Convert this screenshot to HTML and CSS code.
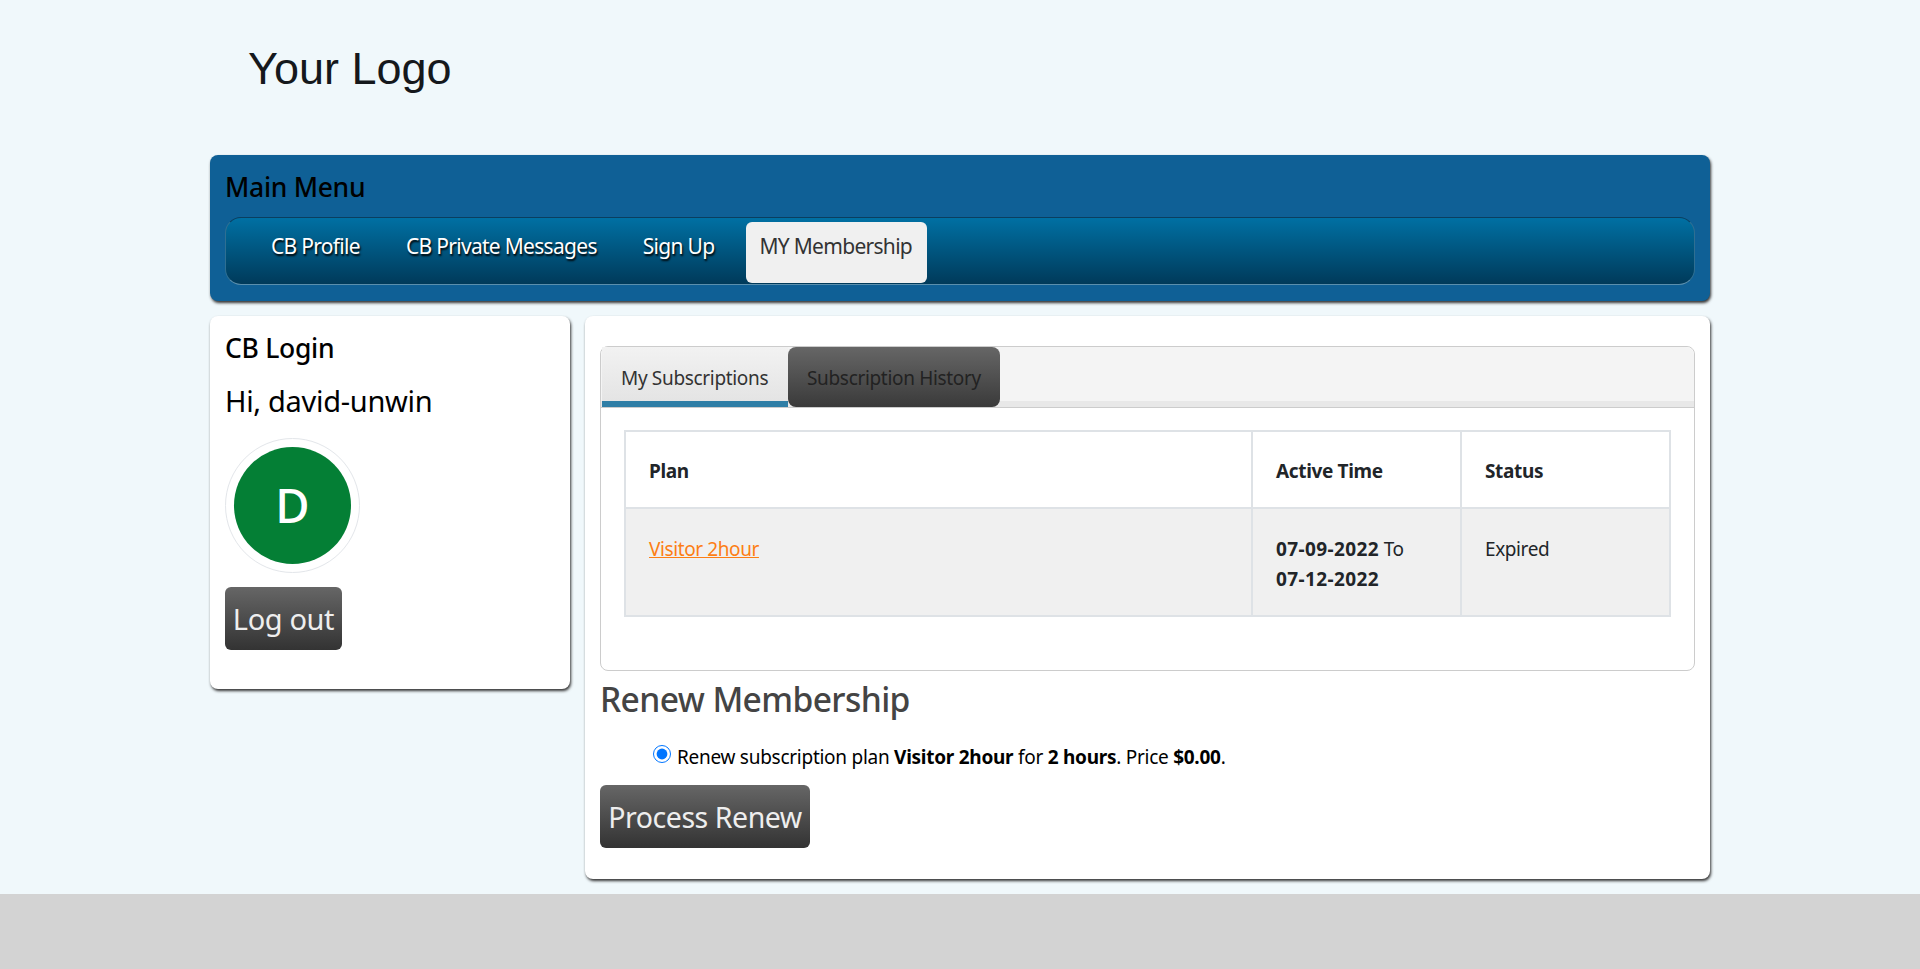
FILE: index.html
```html
<!DOCTYPE html>
<html lang="en">
<head>
    <meta charset="UTF-8">
    <meta name="viewport" content="width=device-width, initial-scale=1.0">
    <title>My Membership</title>
    <link rel="stylesheet" href="styles.css">
</head>
<body>

<div class="container">
    <div class="logo">Your Logo</div>

    <div class="menu-panel">
        <h3 class="panel-title">Main Menu</h3>
        <ul class="main-nav">
            <li><a href="#">CB Profile</a></li>
            <li><a href="#">CB Private Messages</a></li>
            <li><a href="#">Sign Up</a></li>
            <li class="active"><a href="#">MY Membership</a></li>
        </ul>
    </div>

    <div class="columns">
        <div class="card sidebar">
            <h3 class="panel-title">CB Login</h3>
            <p class="greeting">Hi, david-unwin</p>
            <div class="avatar"><span>D</span></div>
            <button type="button" class="button-dark button-logout">Log out</button>
        </div>

        <div class="card content">
            <div class="tabs">
                <div class="tab-bar">
                    <a href="#" class="tab tab-active">My Subscriptions</a>
                    <a href="#" class="tab tab-dark">Subscription History</a>
                </div>
                <div class="tab-body">
                    <table class="plans">
                        <thead>
                            <tr>
                                <th class="col-plan">Plan</th>
                                <th class="col-time">Active Time</th>
                                <th>Status</th>
                            </tr>
                        </thead>
                        <tbody>
                            <tr>
                                <td><a href="#">Visitor 2hour</a></td>
                                <td><strong class="date">07-09-2022</strong> To <strong class="date">07-12-2022</strong></td>
                                <td>Expired</td>
                            </tr>
                        </tbody>
                    </table>
                </div>
            </div>

            <h2 class="renew-title">Renew Membership</h2>
            <label class="renew-option">
                <input type="radio" name="plan" checked>
                <span>Renew subscription plan <strong>Visitor 2hour</strong> for <strong>2 hours</strong>. Price <strong>$0.00</strong>.</span>
            </label>
            <button type="button" class="button-dark button-renew">Process Renew</button>
        </div>
    </div>
</div>

<div class="footer"></div>

</body>
</html>
```

FILE: styles.css
```css
body {
    font-family: "Noto Sans", "Open Sans", Arial, sans-serif;
    margin: 0;
    padding: 0;
    background-color: #f0f8fb; /* Pale blue */
    color: #000;
}
.container {
    width: 1500px;
    margin: 0 auto;
    padding-bottom: 15px;
}
.logo {
    height: 155px;
    box-sizing: border-box;
    padding: 41px 0 0 38px;
    font-family: "Liberation Sans", Arial, sans-serif;
    font-size: 45px;
    line-height: 56px;
    color: #15181c;
}

/* Main menu */
.menu-panel {
    height: 146px;
    box-sizing: border-box;
    padding: 14px 15px 0;
    background-color: #0f6096;
    border-radius: 8px;
    box-shadow: 1px 2px 3px #333;
}
.panel-title {
    margin: 0;
    font-size: 26.5px;
    line-height: 36px;
    font-weight: 500;
    letter-spacing: -0.3px;
}
.main-nav {
    display: flex;
    height: 68px;
    box-sizing: border-box;
    margin: 12px 0 0;
    padding: 4px 0 0 30px;
    list-style: none;
    gap: 16px;
    background: linear-gradient(to bottom, #0070a3, #003a5a);
    border: 1px solid;
    border-color: #0a3f60 #2f6f92 #5a8fad;
    border-radius: 16px;
}
.main-nav a {
    display: block;
    height: 61px;
    box-sizing: border-box;
    padding: 9px 15px 0;
    font-size: 21px;
    line-height: 30px;
    letter-spacing: -0.7px;
    color: #fff;
    text-decoration: none;
    text-shadow: 1px 2px 2px #000;
    border-radius: 6px;
}
.main-nav .active {
    margin-left: 1px;
}
.main-nav .active a {
    padding-left: 13px;
    background-color: #f0f0f0;
    color: #333;
    text-shadow: none;
}

/* Columns */
.columns {
    display: flex;
    align-items: flex-start;
    gap: 15px;
    margin-top: 15px;
}
.card {
    box-sizing: border-box;
    padding: 14px 15px 15px;
    background-color: #fff;
    border-radius: 8px;
    box-shadow: 1px 2px 3px #333;
}
.sidebar {
    width: 360px;
    height: 373px;
}
.content {
    width: 1125px;
    height: 563px;
}
.greeting {
    margin: 15px 0 0;
    font-size: 29px;
    line-height: 40px;
    letter-spacing: -0.3px;
}
.avatar {
    width: 135px;
    height: 135px;
    box-sizing: border-box;
    display: flex;
    align-items: center;
    justify-content: center;
    margin-top: 17px;
    border: 1px solid #e3e6ea;
    border-radius: 50%;
}
.avatar span {
    width: 117px;
    height: 117px;
    border-radius: 50%;
    background-color: #047f35;
    color: #fff;
    font-size: 47px;
    font-weight: 500;
    line-height: 117px;
    text-align: center;
}
.button-dark {
    display: block;
    height: 63px;
    padding: 0;
    border: none;
    border-radius: 6px;
    background: linear-gradient(to bottom, #666, #333);
    color: #eee;
    font-family: inherit;
    font-size: 29px;
    letter-spacing: -0.4px;
    white-space: nowrap;
    cursor: pointer;
}
.button-logout {
    width: 117px;
    margin-top: 14px;
}
.button-renew {
    width: 210px;
    margin-top: 13px;
    font-size: 28.5px;
    letter-spacing: -0.45px;
}

/* Tabs */
.tabs {
    height: 325px;
    box-sizing: border-box;
    margin-top: 16px;
    border: 1px solid #ccc;
    border-radius: 8px;
}
.tab-bar {
    display: flex;
    height: 60px;
    padding-left: 1px;
    background: linear-gradient(to bottom, #f4f4f4 54px, #e8e8e8 54px);
    border-bottom: 1px solid #ccc;
    border-radius: 8px 8px 0 0;
}
.tab {
    display: block;
    box-sizing: border-box;
    height: 60px;
    font-size: 19px;
    line-height: 62px;
    letter-spacing: -0.33px;
    color: #333;
    text-decoration: none;
}
.tab-active {
    width: 186px;
    padding-left: 19px;
    background: linear-gradient(to bottom, #f2f2f2, #e4e4e4);
    border-bottom: 6px solid #2e7ea6;
}
.tab-dark {
    width: 212px;
    padding-left: 19px;
    background: linear-gradient(to bottom, #666, #3a3a3a);
    border-radius: 8px;
    color: #222;
}
.tab-body {
    padding: 22px 23px 0;
}

/* Plans table */
.plans {
    width: 1047px;
    border-collapse: collapse;
    table-layout: fixed;
    font-size: 19px;
    line-height: 30px;
    color: #212529;
}
.plans th,
.plans td {
    padding: 25px 22px 21px 23px;
    border: 2px solid #dee2e6;
    text-align: left;
    vertical-align: top;
    letter-spacing: -0.4px;
}
.plans th {
    padding: 24px 22px 21px 23px;
    letter-spacing: -0.35px;
}
.plans tbody tr {
    background-color: #f0f0f0;
}
.plans a {
    color: #fd7e14;
}
.date {
    white-space: nowrap;
    letter-spacing: 0.4px;
}
.col-plan {
    width: 627px;
    box-sizing: border-box;
}
.col-time {
    width: 209px;
    box-sizing: border-box;
}

/* Renew form */
.renew-title {
    margin: 4px 0 0;
    font-size: 33.6px;
    line-height: 48px;
    font-weight: 500;
    letter-spacing: -0.6px;
    color: #444;
}
.renew-option {
    display: flex;
    align-items: flex-start;
    gap: 6px;
    margin: 19px 0 0 53px;
    font-size: 19px;
    line-height: 30px;
    letter-spacing: -0.27px;
}
.renew-option input {
    width: 18px;
    height: 18px;
    margin: 3px 0 0;
}

.footer {
    height: 75px;
    background-color: #d3d3d3;
}
```
